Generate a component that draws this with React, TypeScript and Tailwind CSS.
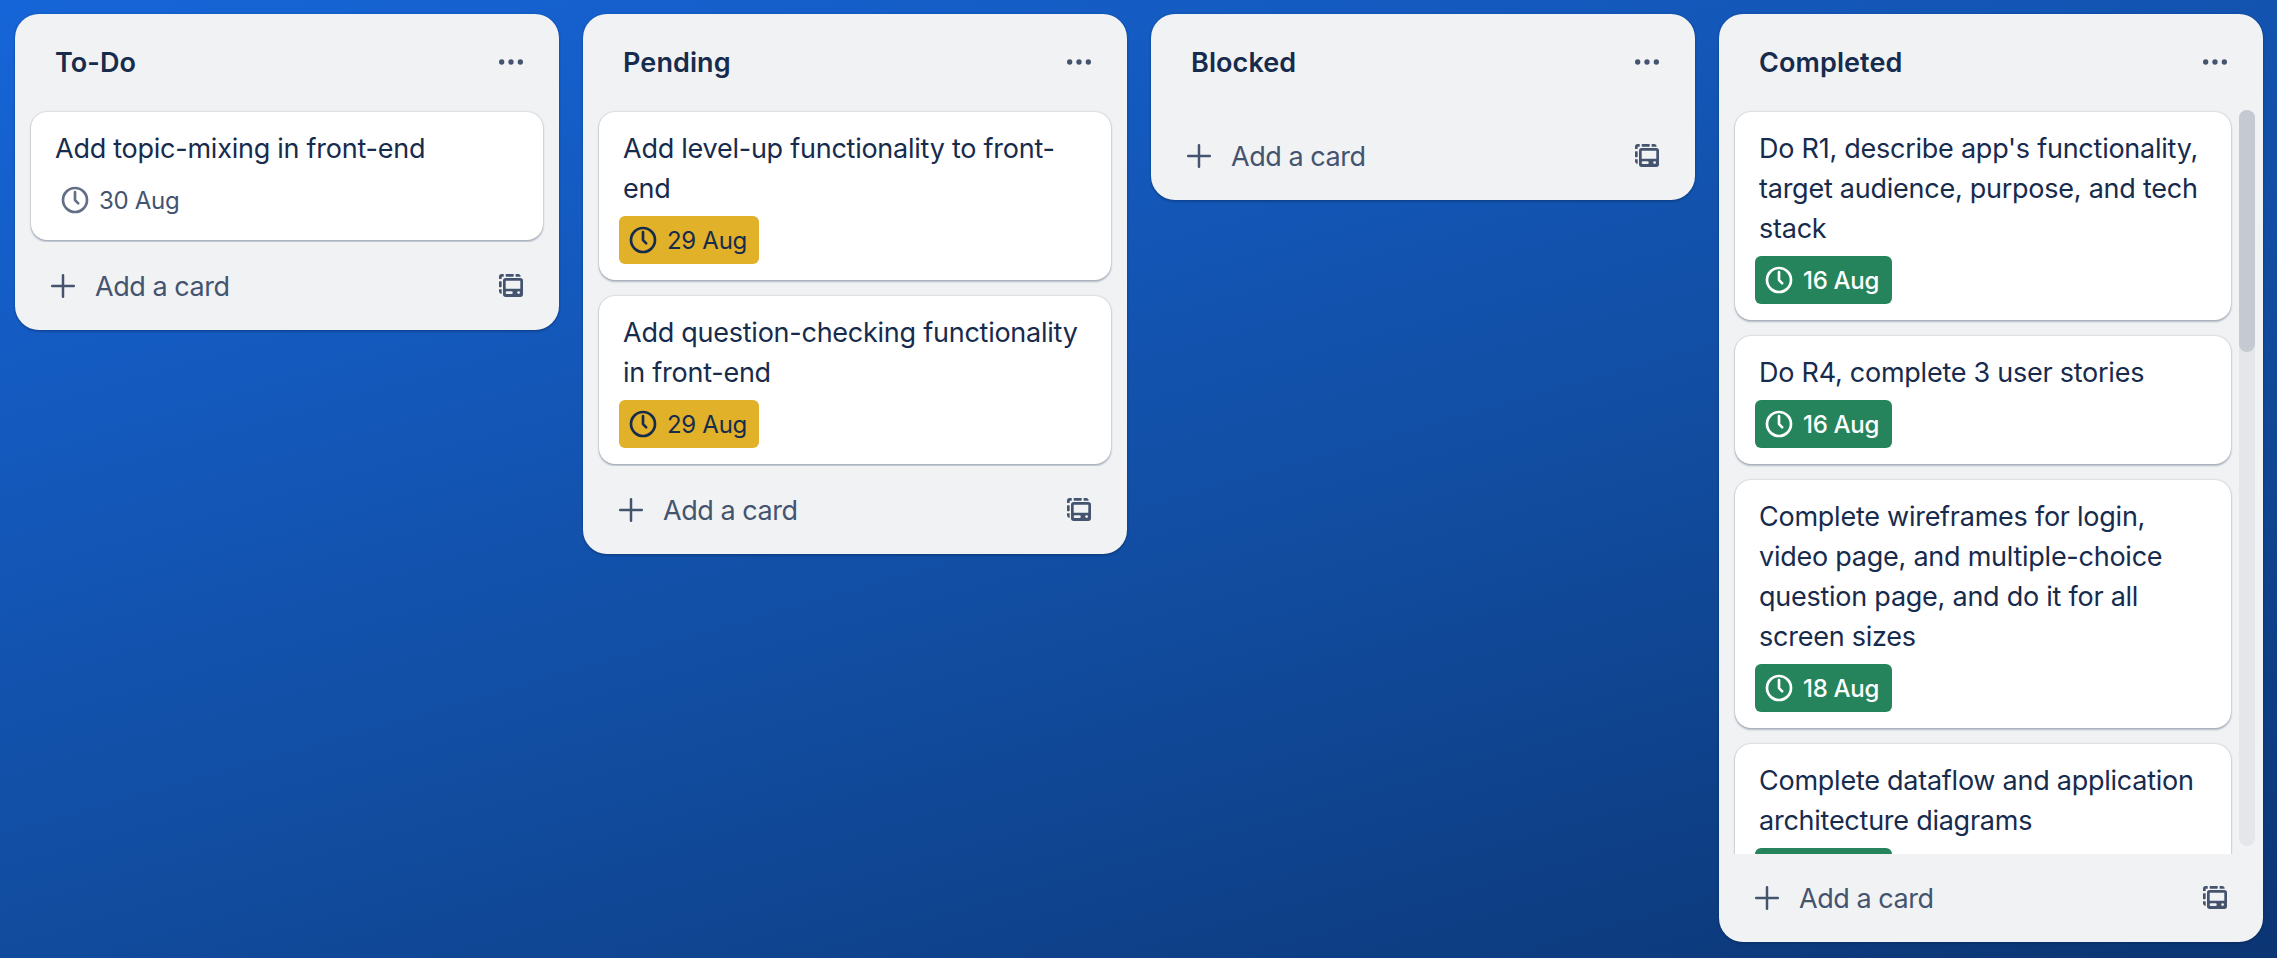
type Tone = 'plain' | 'soon' | 'done';

interface CardData {
  text: string;
  date?: string;
  tone: Tone;
}

interface ListData {
  title: string;
  cards: CardData[];
  scrolls?: boolean;
}

const lists: ListData[] = [
  {
    title: 'To-Do',
    cards: [{ text: 'Add topic-mixing in front-end', date: '30 Aug', tone: 'plain' }],
  },
  {
    title: 'Pending',
    cards: [
      { text: 'Add level-up functionality to front-end', date: '29 Aug', tone: 'soon' },
      { text: 'Add question-checking functionality in front-end', date: '29 Aug', tone: 'soon' },
    ],
  },
  { title: 'Blocked', cards: [] },
  {
    title: 'Completed',
    scrolls: true,
    cards: [
      {
        text: "Do R1, describe app's functionality, target audience, purpose, and tech stack",
        date: '16 Aug',
        tone: 'done',
      },
      { text: 'Do R4, complete 3 user stories', date: '16 Aug', tone: 'done' },
      {
        text: 'Complete wireframes for login, video page, and multiple-choice question page, and do it for all screen sizes',
        date: '18 Aug',
        tone: 'done',
      },
      { text: 'Complete dataflow and application architecture diagrams', tone: 'done' },
    ],
  },
];

const badgeTone: Record<Tone, string> = {
  plain: 'w-[140px] text-[#44546f]',
  soon: 'w-[140px] bg-[#e1b12a] text-[#172b4d]',
  done: 'w-[137px] bg-[#26845c] text-white font-[500]',
};

function ClockIcon({ faded }: { faded: boolean }) {
  return (
    <svg
      viewBox="0 0 24 24"
      className={faded ? 'size-8 shrink-0 text-[#626f86]' : 'size-8 shrink-0'}
      fill="none"
      stroke="currentColor"
      strokeWidth="2"
      strokeLinecap="round"
    >
      <circle cx="12" cy="12" r="9" />
      <path d="M12 6v5.6q0 .5 .4 .9l2 2" />
    </svg>
  );
}

function DotsIcon() {
  return (
    <svg viewBox="0 0 24 24" className="size-8" fill="currentColor">
      <circle cx="5" cy="12" r="2" />
      <circle cx="12" cy="12" r="2" />
      <circle cx="19" cy="12" r="2" />
    </svg>
  );
}

function PlusIcon() {
  return (
    <svg
      viewBox="0 0 32 32"
      className="size-8 shrink-0"
      fill="none"
      stroke="currentColor"
      strokeWidth="2.5"
      strokeLinecap="round"
    >
      <path d="M16 5.2v21.6M5.2 16h21.6" />
    </svg>
  );
}

function TemplateIcon() {
  return (
    <svg viewBox="0 0 32 32" className="size-8" fill="currentColor">
      <path d="M6.7 4H8.7V6.67H6.67V9H4V6.7A2.7 2.7 0 0 1 6.7 4Z" />
      <rect x="10.7" y="4" width="8" height="2.67" rx="0.6" />
      <path d="M20.6 4H23a2.7 2.7 0 0 1 2.6 2.67H20.6Z" />
      <rect x="4" y="11.2" width="2.67" height="6" rx="0.6" />
      <path d="M4 19.2H6.67V24A2.7 2.7 0 0 1 4 21.6Z" />
      <path
        fillRule="evenodd"
        d="M10.7 8h14.6a2.7 2.7 0 0 1 2.7 2.7v13.6a2.7 2.7 0 0 1-2.7 2.7H10.7a2.7 2.7 0 0 1-2.7-2.7V10.7A2.7 2.7 0 0 1 10.7 8ZM10.7 10.7v8h14.6v-8ZM12 21.3a1.35 1.35 0 0 0 0 2.7h4.4a1.35 1.35 0 0 0 0-2.7ZM23.6 21.2a1.4 1.4 0 1 0 0 2.8a1.4 1.4 0 1 0 0-2.8Z"
      />
    </svg>
  );
}

function Card({ card }: { card: CardData }) {
  return (
    <article className="shrink-0 rounded-2xl bg-white px-6 pt-[17px] pb-4 shadow-[0_2px_2px_#091e4240,0_0_2px_#091e424f]">
      <p className="text-[27px] leading-10 font-[440] tracking-[-0.25px] text-[#172b4d]">
        {card.text}
      </p>
      <div
        className={`mt-[7px] -ml-1 flex h-12 items-center gap-2 rounded-md pl-2 text-2xl tracking-[-0.3px] whitespace-nowrap ${badgeTone[card.tone]}`}
      >
        <ClockIcon faded={card.tone === 'plain'} />
        {card.date && <span className="pt-0.5">{card.date}</span>}
      </div>
    </article>
  );
}

function List({ list }: { list: ListData }) {
  return (
    <section
      className={`flex w-[544px] shrink-0 flex-col rounded-3xl bg-[#f1f2f4] text-[#44546f] shadow-[0_2px_2px_#091e4240,0_0_2px_#091e424f] ${list.scrolls ? 'h-[928px]' : ''}`}
    >
      <header className="flex h-24 shrink-0 items-center justify-between pr-8 pl-10">
        <h2 className="pt-0.5 text-[27px] leading-10 font-[640] tracking-[0.1px] text-[#172b4d]">
          {list.title}
        </h2>
        <DotsIcon />
      </header>
      <div className="flex min-h-0 flex-1">
        <div
          className={`flex flex-1 flex-col gap-4 overflow-hidden pt-0.5 pl-4 ${list.scrolls ? 'pr-2' : 'pr-4'} ${list.cards.length ? 'pb-0.5' : ''}`}
        >
          {list.cards.map((card) => (
            <Card key={card.text} card={card} />
          ))}
        </div>
        {list.scrolls && (
          <div className="mr-2 mb-2 w-4 rounded-full bg-[#e4e6ea]">
            <div className="h-[242px] rounded-full bg-[#c4c9d2]" />
          </div>
        )}
      </div>
      <footer className="flex h-[88px] shrink-0 items-center justify-between px-8">
        <div className="flex items-center gap-4 text-[27px] leading-10 font-[430] tracking-[-0.45px]">
          <PlusIcon />
          <span className="pt-0.5">Add a card</span>
        </div>
        <TemplateIcon />
      </footer>
    </section>
  );
}

export default function App() {
  return (
    <main className="flex h-[958px] w-[2277px] items-start gap-6 overflow-hidden bg-[linear-gradient(164deg,#1665d8_0%,#114b9d_60%,#0b3573_100%)] pt-3.5 pl-[15px] font-['Inter','Liberation_Sans',sans-serif]">
      {lists.map((list) => (
        <List key={list.title} list={list} />
      ))}
    </main>
  );
}
